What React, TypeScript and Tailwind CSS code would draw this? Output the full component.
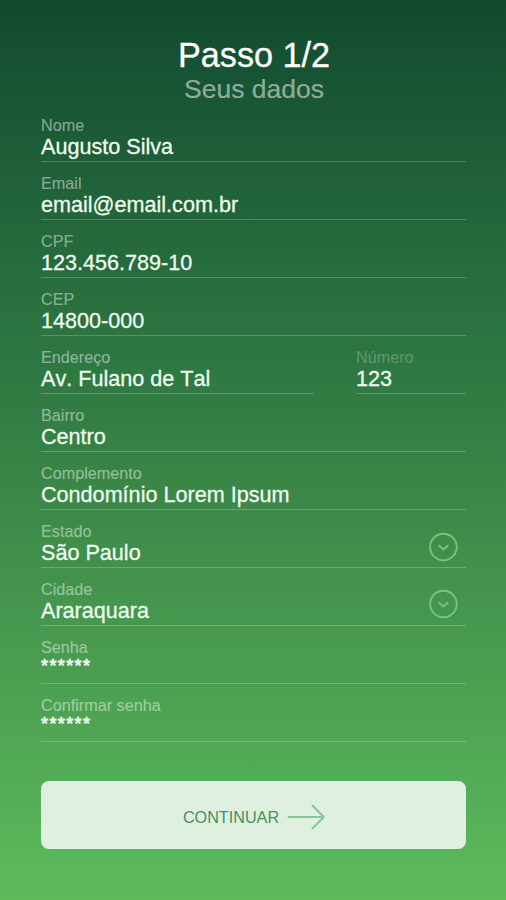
import type { ReactNode } from "react";

type FieldProps = {
  label: string;
  value: string;
  className?: string;
  labelClass?: string;
  valueClass?: string;
  children?: ReactNode;
};

const textValue = "pt-px text-[21.6px] leading-[22px] [-webkit-text-stroke:0.3px_#eefbee]";
const maskedValue = "text-[18px] leading-[19px] tracking-[1.4px] [-webkit-text-stroke:0.7px_#eefbee]";

function Field({
  label,
  value,
  className = "",
  labelClass = "text-white/45 [-webkit-text-stroke:0.2px_rgba(255,255,255,0.3)]",
  valueClass = textValue,
  children,
}: FieldProps) {
  return (
    <div className={`flex h-[58px] justify-between border-b border-white/22 pt-[11px] ${className}`}>
      <div className="whitespace-nowrap">
        <div className={`text-[16.2px] leading-5 ${labelClass}`}>{label}</div>
        <div className={`text-[#eefbee] ${valueClass}`}>{value}</div>
      </div>
      {children}
    </div>
  );
}

function Chevron({ className }: { className: string }) {
  return (
    <svg
      className={`mr-2 h-[30px] w-[30px] shrink-0 text-[#7cc27f] ${className}`}
      viewBox="0 0 30 30"
      fill="none"
      stroke="currentColor"
      strokeWidth="1.9"
      strokeLinecap="round"
      strokeLinejoin="round"
    >
      <circle cx="15.4" cy="15" r="13.3" />
      <path d="M11.1 13.8 L15.4 17.6 L19.7 13.8" />
    </svg>
  );
}

export default function App() {
  return (
    <main
      className="flex h-[900px] w-[506px] flex-col bg-[linear-gradient(180deg,#114a30_0%,#1f6038_19%,#2e7842_41%,#3d8b49_58%,#4fa453_80%,#5dbb5c_100%)] pr-10 pl-[41px] pt-[35px] [font-kerning:none]"
      style={{ fontFamily: '"Liberation Sans", Arial, sans-serif' }}
    >
      <header className="pl-px text-center">
        <h1 className="text-[34.2px] leading-10 text-white [-webkit-text-stroke:0.3px_white]">Passo 1/2</h1>
        <p className="text-[26.5px] leading-[29px] text-white/50 [-webkit-text-stroke:0.2px_rgba(255,255,255,0.4)]">
          Seus dados
        </p>
      </header>

      <form className="flex flex-col">
        <Field label="Nome" value="Augusto Silva" />
        <Field label="Email" value="email@email.com.br" />
        <Field label="CPF" value="123.456.789-10" />
        <Field label="CEP" value="14800-000" />
        <div className="flex justify-between">
          <Field label="Endereço" value="Av. Fulano de Tal" className="w-[273px]" />
          <Field label="Número" value="123" className="w-[110px]" labelClass="text-white/25" />
        </div>
        <Field label="Bairro" value="Centro" />
        <Field label="Complemento" value="Condomínio Lorem Ipsum" />
        <Field label="Estado" value="São Paulo">
          <Chevron className="mt-[11px]" />
        </Field>
        <Field label="Cidade" value="Araraquara">
          <Chevron className="mt-[10px]" />
        </Field>
        <Field label="Senha" value="******" valueClass={maskedValue} />
        <Field label="Confirmar senha" value="******" valueClass={maskedValue} />

        <button
          type="button"
          className="mt-[39px] flex h-[68px] items-center justify-center rounded-lg bg-[#e0f0e0] pt-1 pl-px"
        >
          <span className="text-[16.2px] leading-5 text-[#46915f]">CONTINUAR</span>
          <svg
            className="ml-2 h-7 w-[38px] text-[#8cc49b]"
            viewBox="0 0 38 28"
            fill="none"
            stroke="currentColor"
            strokeWidth="2"
            strokeLinecap="round"
            strokeLinejoin="round"
          >
            <path d="M1.5 14 H36.5 M25.5 2.5 L36.8 14 L25.5 25.5" />
          </svg>
        </button>
      </form>
    </main>
  );
}
